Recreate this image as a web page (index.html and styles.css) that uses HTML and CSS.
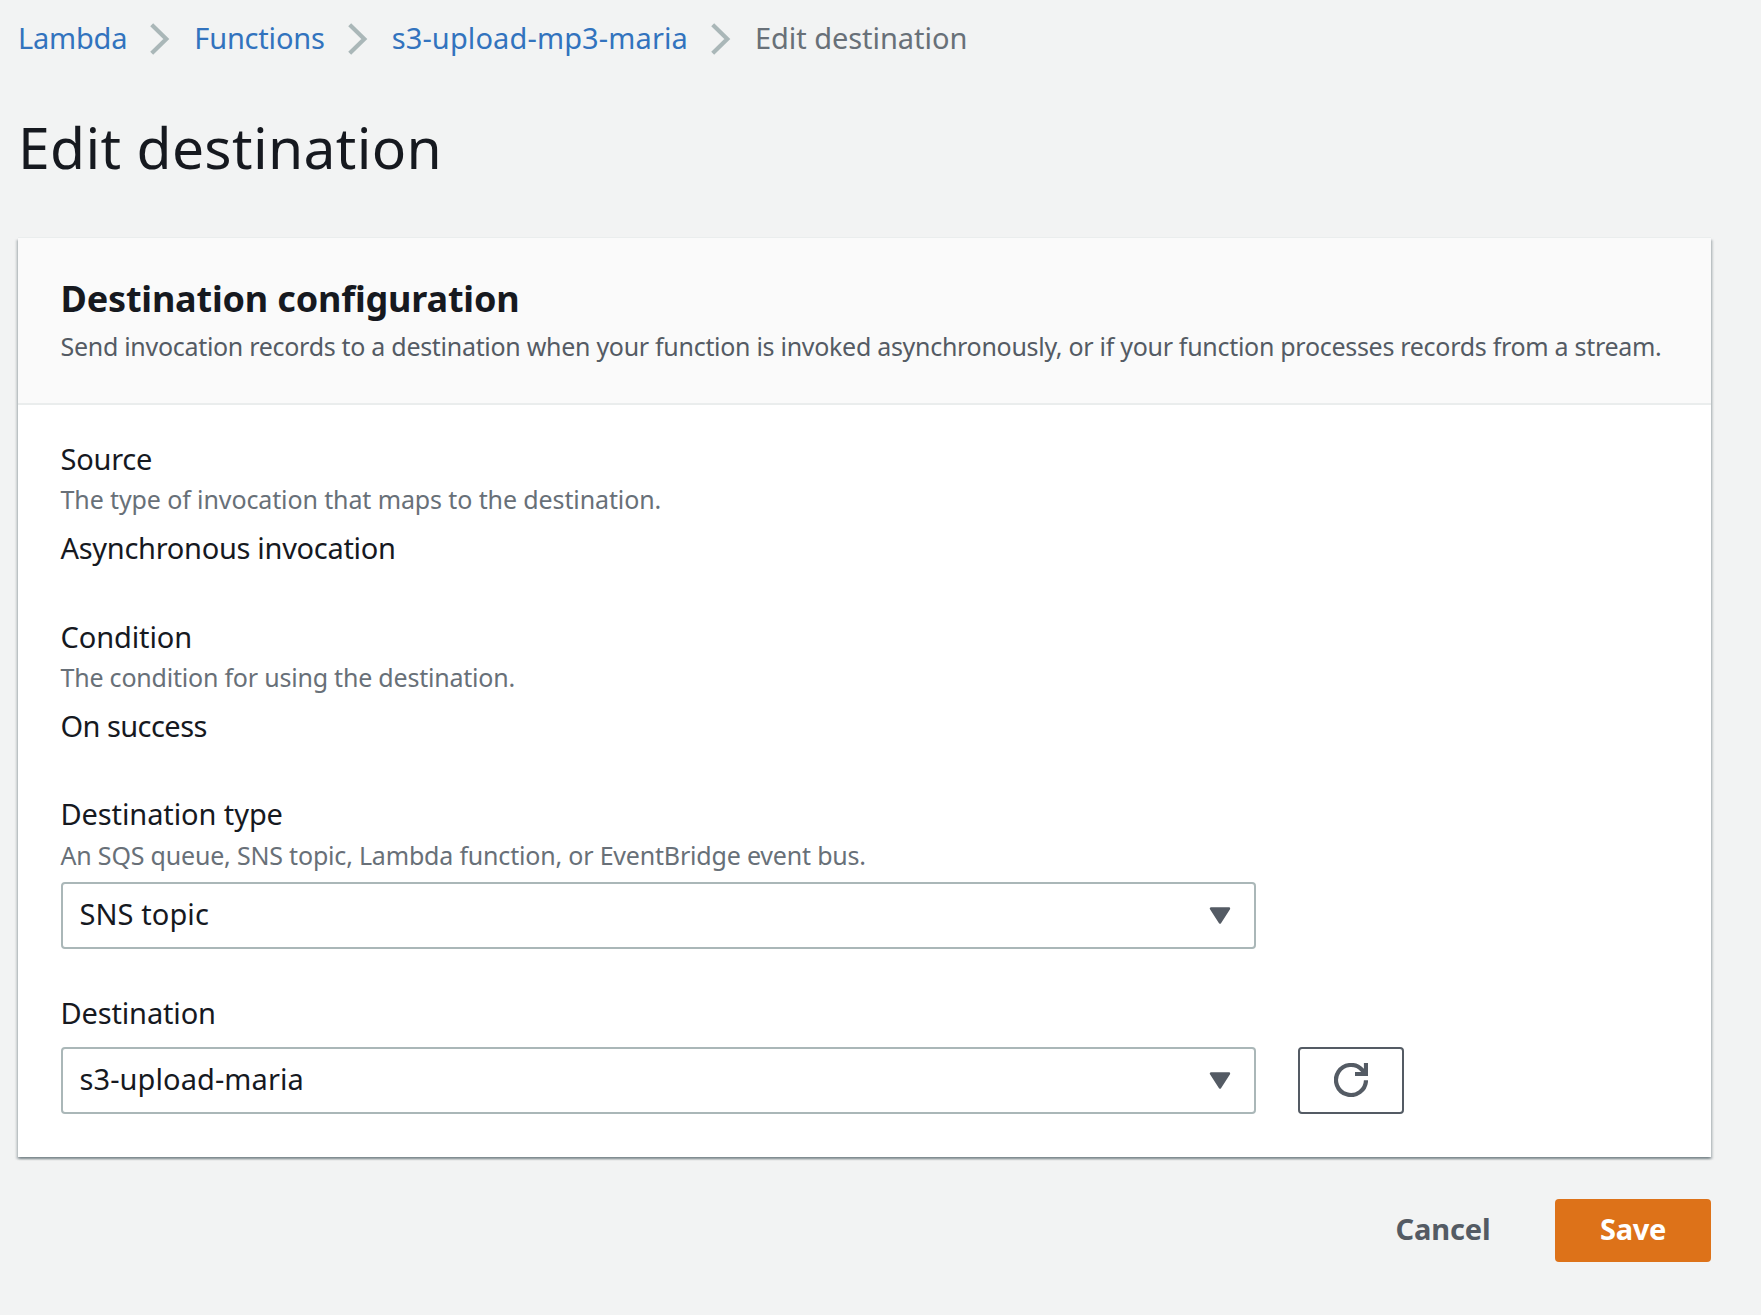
FILE: index.html
```
<!DOCTYPE html>
<html lang="en">
<head>
<meta charset="utf-8">
<title>Edit destination</title>
<link rel="stylesheet" href="styles.css">
</head>
<body>
<nav class="breadcrumbs">
  <a class="crumb crumb-root" href="#">Lambda</a>
  <svg class="chevron" viewBox="0 0 20 32"><path d="M1.7 1.7 16.3 16 1.7 30.3"/></svg>
  <a class="crumb crumb-root" href="#">Functions</a>
  <svg class="chevron" viewBox="0 0 20 32"><path d="M1.7 1.7 16.3 16 1.7 30.3"/></svg>
  <a class="crumb crumb-function" href="#">s3-upload-mp3-maria</a>
  <svg class="chevron" viewBox="0 0 20 32"><path d="M1.7 1.7 16.3 16 1.7 30.3"/></svg>
  <span class="crumb crumb-current">Edit destination</span>
</nav>
<h1 class="title">Edit destination</h1>
<main class="card">
  <header class="card-header">
    <h2 class="card-title">Destination configuration</h2>
    <p class="card-description">Send invocation records to a destination when your function is invoked asynchronously, or if your function processes records from a stream.</p>
  </header>
  <div class="card-body">
    <section class="field">
      <div class="label label-source">Source</div>
      <div class="hint hint-source">The type of invocation that maps to the destination.</div>
      <div class="value value-source">Asynchronous invocation</div>
    </section>
    <section class="field">
      <div class="label">Condition</div>
      <div class="hint hint-condition">The condition for using the destination.</div>
      <div class="value value-condition">On success</div>
    </section>
    <section class="field field-type">
      <div class="label label-type">Destination type</div>
      <div class="hint hint-type">An SQS queue, SNS topic, Lambda function, or EventBridge event bus.</div>
      <div class="select">
        <span class="select-value">SNS topic</span>
        <svg class="caret" viewBox="0 0 22 17"><path d="M2 1.5H20L11 15.5Z"/></svg>
      </div>
    </section>
    <section class="field field-destination">
      <div class="label label-destination">Destination</div>
      <div class="row">
        <div class="select">
          <span class="select-value">s3-upload-maria</span>
          <svg class="caret" viewBox="0 0 22 17"><path d="M2 1.5H20L11 15.5Z"/></svg>
        </div>
        <button class="refresh" type="button" aria-label="Refresh">
          <svg class="refresh-icon" viewBox="0 0 34 34"><path d="M32 17.3A15 15 0 1 1 28.2 7L31 10.5"/><path d="M32 0V11H21"/></svg>
        </button>
      </div>
    </section>
  </div>
</main>
<footer class="actions">
  <button class="button cancel" type="button">Cancel</button>
  <button class="button save" type="button">Save</button>
</footer>
</body>
</html>
```
FILE: styles.css
```
* { box-sizing: border-box; }
body {
  margin: 0;
  padding: 16px 50px 0 18px;
  min-height: 1315px;
  background: #f2f3f3;
  color: #16191f;
  font: 29px/44px "Noto Sans", "Open Sans", sans-serif;
}
h1, h2, p { margin: 0; }
.breadcrumbs { display: flex; align-items: center; height: 44px; }
.crumb { color: #3273be; text-decoration: none; white-space: nowrap; }
.crumb-root { letter-spacing: -0.2px; }
.crumb-function { letter-spacing: 0.12px; }
.crumb-current { color: #687078; letter-spacing: -0.05px; }
.chevron { flex: none; width: 20px; height: 32px; margin: 2px 24px 0 23px; fill: none; stroke: #aab7b8; stroke-width: 4.2; }
.title { margin: 53px 0 57px; font-size: 57px; line-height: 68px; font-weight: 400; letter-spacing: 0.33px; }
.card {
  background: #fff;
  box-shadow: 0 -1px 0 #eaeded, 0 2px 2px 0 rgba(0, 28, 36, .3), 2px 2px 2px 0 rgba(0, 28, 36, .15), -2px 2px 2px 0 rgba(0, 28, 36, .15);
}
.card-header { padding: 39px 42.5px 37px; background: #fafafa; border-bottom: 2px solid #eaeded; }
.card-title { margin-bottom: 5px; font-size: 36px; line-height: 44px; font-weight: 700; letter-spacing: -0.18px; }
.card-description { font-size: 25px; line-height: 40px; letter-spacing: -0.295px; color: #545b64; white-space: nowrap; }
.card-body { padding: 33px 43px 43px 42.5px; }
.field-destination { margin-top: 43px; }
.label { line-height: 42px; margin-bottom: -1px; letter-spacing: -0.1px; }
.label-source { letter-spacing: -0.24px; }
.label-type { margin: -1px 0 0; }
.label-destination { margin-bottom: 13px; letter-spacing: -0.15px; }
.hint { margin-bottom: 7px; font-size: 25px; line-height: 40px; color: #687078; }
.hint-source { letter-spacing: -0.11px; }
.hint-condition { letter-spacing: -0.21px; }
.hint-type { letter-spacing: -0.19px; }
.value { margin-bottom: 46px; }
.value-source { letter-spacing: -0.3px; }
.value-condition { letter-spacing: -0.56px; }
.field-type { display: flow-root; margin-top: -1px; padding-top: 1px; }
.row { display: flex; gap: 42.5px; }
.select {
  display: flex;
  align-items: center;
  justify-content: space-between;
  width: 1195px;
  height: 67px;
  padding: 0 23px 0 17px;
  border: 2px solid #aab7b8;
  border-radius: 4px;
  letter-spacing: 0.08px;
}
.select-value { padding-bottom: 3px; }
.caret { width: 22px; height: 17px; fill: #545b64; stroke: #545b64; stroke-width: 2.4; stroke-linejoin: round; }
.refresh {
  display: flex;
  align-items: center;
  justify-content: center;
  width: 106px;
  height: 67px;
  padding: 0 1px 1px 0;
  background: #fff;
  border: 2px solid #545b64;
  border-radius: 4px;
}
.refresh-icon { width: 34px; height: 34px; fill: none; stroke: #545b64; stroke-width: 4.2; }
.actions { display: flex; justify-content: flex-end; gap: 42px; margin-top: 42px; }
.button { height: 63px; padding: 0 0 3px; border: 0; border-radius: 4px; background: none; font: 700 29px/44px "Noto Sans", "Open Sans", sans-serif; }
.cancel { width: 140px; color: #545b64; letter-spacing: -0.1px; }
.save { width: 156px; background: #dd7219; color: #fff; letter-spacing: -0.3px; }
```
